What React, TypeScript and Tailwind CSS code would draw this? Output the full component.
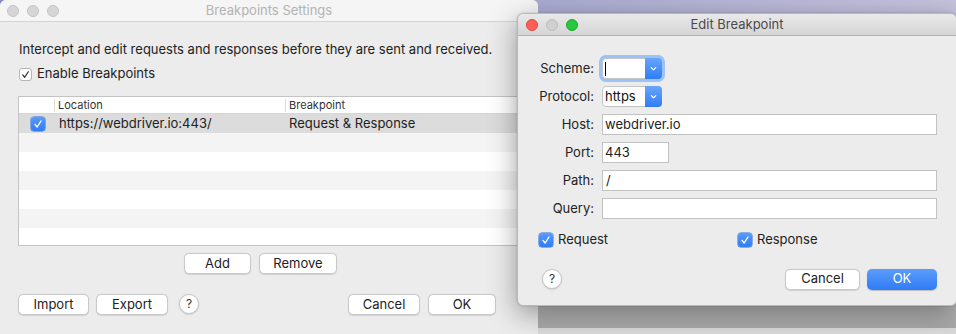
import type { ReactNode } from 'react'

const FONT = "font-['Inter','Liberation_Sans',Arial,sans-serif]"

function Check({ className = '' }: { className?: string }) {
  return (
    <svg viewBox="0 0 14 14" className={className} fill="none">
      <path d="M3.5 7.5 L6 10.5 L10.5 3.5" stroke="currentColor" strokeWidth="1.6" strokeLinecap="round" strokeLinejoin="round" />
    </svg>
  )
}

function BlueCheck({ size = 14 }: { size?: number }) {
  return (
    <span
      className="flex items-center justify-center rounded-[3px] bg-[linear-gradient(#5a9bfb,#2f7cf6)] text-white shadow-[0_0_0_0.5px_#2a6fd8]"
      style={{ width: size, height: size }}
    >
      <Check className="w-[12px] h-[12px]" />
    </span>
  )
}

function Button({ children, className = '' }: { children: ReactNode; className?: string }) {
  return (
    <div
      className={`h-[21px] flex items-center justify-center rounded-[5px] bg-white border border-[#c9c9c9] shadow-[0_0.5px_1px_rgba(0,0,0,0.12)] text-[13px] text-[#222] ${className}`}
    >
      {children}
    </div>
  )
}

function Help({ className = '' }: { className?: string }) {
  return (
    <div
      className={`w-[20px] h-[20px] rounded-full bg-white border border-[#c9c9c9] shadow-[0_0.5px_1.5px_rgba(0,0,0,0.2)] flex items-center justify-center text-[12px] text-[#333] ${className}`}
    >
      ?
    </div>
  )
}

function Lights({ active }: { active?: boolean }) {
  const colors = active
    ? ['bg-[#fe5f57] border-[#e0443e]', 'bg-[#d0d0d0] border-[#bdbdbd]', 'bg-[#28c840] border-[#1aab29]']
    : ['bg-[#d6d6d6] border-[#c4c4c4]', 'bg-[#d6d6d6] border-[#c4c4c4]', 'bg-[#d6d6d6] border-[#c4c4c4]']
  return (
    <div className="flex gap-[8px]">
      {colors.map((c, i) => (
        <span key={i} className={`w-[12px] h-[12px] rounded-full border ${c}`} />
      ))}
    </div>
  )
}

function Combo({ value, focused }: { value: string; focused?: boolean }) {
  return (
    <div
      className={`w-[60px] h-[21px] flex rounded-[4px] bg-white border border-[#c4c4c4] ${
        focused ? 'shadow-[0_0_0_3px_#9cc2f7]' : ''
      }`}
    >
      <div className="flex-1 flex items-center pl-[2px] text-[13px] text-[#111]">
        {focused ? <span className="w-[1px] h-[14px] bg-black" /> : value}
      </div>
      <div className="w-[17px] -m-px rounded-r-[4px] bg-[linear-gradient(#69a6fb,#2f7cf6)] flex items-center justify-center">
        <svg viewBox="0 0 10 10" className="w-[9px] h-[9px]" fill="none">
          <path d="M2.5 4 L5 6.5 L7.5 4" stroke="white" strokeWidth="1.4" strokeLinecap="round" strokeLinejoin="round" />
        </svg>
      </div>
    </div>
  )
}

const rows = ['bg-[#dcdcdc]', 'bg-[#f4f4f4]', 'bg-white', 'bg-[#f4f4f4]', 'bg-white', 'bg-[#f4f4f4]', 'bg-white']

export default function App() {
  return (
    <div className={`relative w-[956px] h-[334px] overflow-hidden bg-[#c4c4c4] ${FONT}`}>
      {/* desktop strip at the top right */}
      <div className="absolute left-0 top-0 w-[956px] h-[40px] bg-[linear-gradient(90deg,#868cbf,#c6c3de)]" />

      {/* window behind, bottom right */}
      <div className="absolute left-[538px] top-[290px] w-[418px] h-[44px] flex flex-col">
        <div className="flex-1 bg-[linear-gradient(#c9c9c9,#a9a9a9)]" />
        <div className="h-[6px] bg-[#dcdcdc]" />
      </div>

      {/* Breakpoints Settings window */}
      <div className="absolute left-0 top-0 w-[538px] h-[360px] rounded-t-[6px] bg-[#ececec] flex flex-col">
        <div className="relative h-[22px] shrink-0 flex items-center px-[7px] rounded-t-[6px] bg-[#f5f5f5] border-b border-[#d4d4d4]">
          <Lights />
          <span className="absolute inset-x-0 text-center text-[13px] text-[#b3b3b3]">Breakpoints Settings</span>
        </div>

        <div className="px-[18px] flex flex-col">
          <p className="mt-[19px] pl-px text-[13px] leading-[16px] text-[#222]">
            Intercept and edit requests and responses before they are sent and received.
          </p>
          <div className="mt-[9px] flex items-center gap-[5px] h-[16px] pl-px text-[13px] text-[#222]">
            <span className="w-[13px] h-[13px] rounded-[3px] bg-white border border-[#b5b5b5] flex items-center justify-center text-[#333]">
              <Check className="w-[11px] h-[11px]" />
            </span>
            Enable Breakpoints
          </div>

          <div className="mt-[14px] w-[500px] h-[150px] border border-[#c4c4c4] bg-white flex flex-col overflow-hidden">
            <div className="h-[17px] shrink-0 flex items-center border-b border-[#d6d6d6] text-[11px] text-[#333]">
              <div className="w-[36px] h-[13px] border-r border-[#dcdcdc]" />
              <div className="w-[231px] pl-[3px] h-[13px] leading-[13px] border-r border-[#dcdcdc]">Location</div>
              <div className="flex-1 pl-[3px] h-[13px] leading-[13px]">Breakpoint</div>
            </div>
            {rows.map((bg, i) => (
              <div key={i} className={`h-[19px] shrink-0 flex items-center text-[13px] text-[#222] ${bg}`}>
                {i === 0 && (
                  <>
                    <div className="w-[36px] flex justify-center pl-[1px]">
                      <BlueCheck size={14} />
                    </div>
                    <div className="w-[231px] pl-[4px]">https://webdriver.io:443/</div>
                    <div className="flex-1 pl-[3px]">Request &amp; Response</div>
                  </>
                )}
              </div>
            ))}
          </div>

          <div className="mt-[7px] flex gap-[8px] ml-[166px]">
            <Button className="w-[67px]">Add</Button>
            <Button className="w-[78px]">Remove</Button>
          </div>

          <div className="mt-[20px] flex items-center">
            <Button className="w-[71px]">Import</Button>
            <Button className="w-[72px] ml-[7px]">Export</Button>
            <Help className="ml-[11px] -mt-[2px]" />
            <Button className="w-[72px] ml-[149px]">Cancel</Button>
            <Button className="w-[68px] ml-[8px]">OK</Button>
          </div>
        </div>
      </div>

      {/* Edit Breakpoint dialog */}
      <div className="absolute left-[517px] top-[13px] w-[440px] h-[293px] rounded-[6px] bg-[#ececec] border border-[#b9b9b9] shadow-[0_8px_28px_rgba(0,0,0,0.38),0_0_2px_rgba(0,0,0,0.2)] flex flex-col text-[13px] text-[#222]">
        <div className="relative h-[22px] shrink-0 flex items-center px-[8px] rounded-t-[6px] bg-[linear-gradient(#e9e9e9,#d5d5d5)] border-b border-[#b3b3b3]">
          <Lights active />
          <span className="absolute inset-x-0 text-center text-[13px] text-[#4a4a4a]">Edit Breakpoint</span>
        </div>

        <div className="flex flex-col pt-[22px] pr-[19px]">
          <div className="grid grid-cols-[76px_1fr] gap-x-[8px] gap-y-[7px] items-center">
            <span className="text-right">Scheme:</span>
            <Combo value="" focused />
            <span className="text-right">Protocol:</span>
            <Combo value="https" />
            <span className="text-right">Host:</span>
            <div className="h-[21px] border border-[#c2c2c2] bg-white flex items-center pl-[2px]">webdriver.io</div>
            <span className="text-right">Port:</span>
            <div className="w-[67px] h-[21px] border border-[#c2c2c2] bg-white flex items-center pl-[2px]">443</div>
            <span className="text-right">Path:</span>
            <div className="h-[21px] border border-[#c2c2c2] bg-white flex items-center pl-[3px]">/</div>
            <span className="text-right">Query:</span>
            <div className="h-[21px] border border-[#c2c2c2] bg-white" />
          </div>

          <div className="mt-[11px] flex items-center pl-[21px]">
            <div className="w-[199px] flex items-center gap-[5px]">
              <BlueCheck size={14} />
              Request
            </div>
            <div className="flex items-center gap-[5px]">
              <BlueCheck size={14} />
              Response
            </div>
          </div>

          <div className="mt-[19px] flex items-center pl-[24px]">
            <Help />
            <div className="ml-auto flex gap-[7px]">
              <Button className="w-[75px]">Cancel</Button>
              <div className="w-[70px] h-[21px] rounded-[5px] bg-[linear-gradient(#5c9cfb,#2f7cf6)] shadow-[0_0.5px_1px_rgba(0,0,0,0.2)] flex items-center justify-center text-white">
                OK
              </div>
            </div>
          </div>
        </div>
      </div>
    </div>
  )
}
